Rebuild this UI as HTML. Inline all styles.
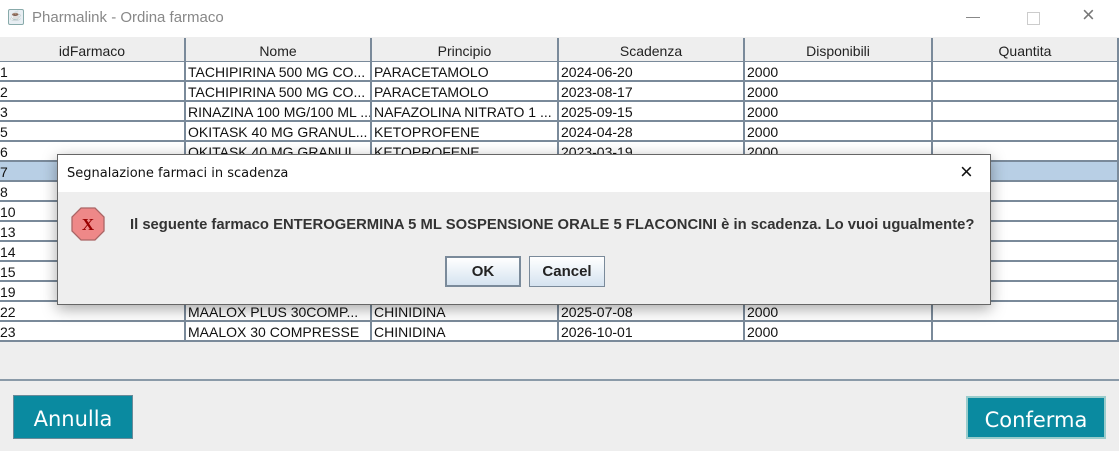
<!DOCTYPE html>
<html><head><style>
body{margin:0;width:1119px;height:451px;background:#eeeeee;position:relative;overflow:hidden;font-family:"Liberation Sans",Arial,sans-serif;}
.a{position:absolute;}
.title{left:0;top:0;width:1119px;height:37px;background:#fff;}
.hd{top:38px;height:24px;background:#eeeeee;border-right:2px solid #7a8a9a;box-sizing:border-box;text-align:center;font-size:14px;line-height:26px;color:#222;border-bottom:1px solid #7a8a9a}
.row{left:0;width:1119px;height:20px;background:#fff;box-sizing:border-box;border-bottom:2px solid #7a8a9a;}
.c{position:absolute;top:0;height:18px;font-size:14px;line-height:20px;color:#111;padding-left:2px;white-space:nowrap;overflow:hidden;box-sizing:border-box;border-right:2px solid #7a8a9a}
.btn{font-family:"DejaVu Sans",sans-serif;color:#fff;background:#0a8aa0;font-size:21px;text-align:center;box-sizing:border-box;}
</style></head><body>
<div class="a title"></div>
<div class="a" style="left:8px;top:9px;width:16px;height:16px;border:1px solid #8aa;border-radius:2px;background:#e8eef3;box-sizing:border-box;font-size:10px;text-align:center;line-height:14px;color:#c55">☕</div>
<div class="a" style="left:32px;top:9px;font-size:15px;color:#888;">Pharmalink - Ordina farmaco</div>
<div class="a" style="left:966px;top:17px;width:14px;height:1px;background:#888"></div>
<div class="a" style="left:1027px;top:12px;width:11px;height:11px;border:1px solid #ccc"></div>
<div class="a" style="left:1082px;top:2px;font-size:22px;color:#777;font-weight:100">×</div>

<div class="a hd" style="left:0;width:186px">idFarmaco</div>
<div class="a hd" style="left:186px;width:186px">Nome</div>
<div class="a hd" style="left:372px;width:187px">Principio</div>
<div class="a hd" style="left:559px;width:186px">Scadenza</div>
<div class="a hd" style="left:745px;width:188px">Disponibili</div>
<div class="a hd" style="left:933px;width:186px">Quantita</div>

<div id="rows"></div>
<script>
var d=[["1","TACHIPIRINA 500 MG CO...","PARACETAMOLO","2024-06-20"],["2","TACHIPIRINA 500 MG CO...","PARACETAMOLO","2023-08-17"],["3","RINAZINA 100 MG/100 ML ...","NAFAZOLINA NITRATO 1 ...","2025-09-15"],["5","OKITASK 40 MG GRANUL...","KETOPROFENE","2024-04-28"],["6","OKITASK 40 MG GRANUL...","KETOPROFENE","2023-03-19"],["7","","",""],["8","","",""],["10","","",""],["13","","",""],["14","","",""],["15","","",""],["19","","",""],["22","MAALOX PLUS 30COMP...","CHINIDINA","2025-07-08"],["23","MAALOX 30 COMPRESSE","CHINIDINA","2026-10-01"]];
var h="",xs=[0,186,372,559,745,933,1119];
d.forEach(function(r,i){var y=62+i*20;var bg=i==5?"#b8cfe5":"#fff";var v=[r[0],r[1],r[2],r[3],r[1]?"2000":"",""];
h+='<div class="a row" style="top:'+y+'px;background:'+bg+'">';
for(var j=0;j<6;j++)h+='<div class="c" style="left:'+xs[j]+'px;width:'+(xs[j+1]-xs[j])+'px;'+(j==0?'padding-left:0':'')+'">'+v[j]+'</div>';
h+='</div>';});
document.getElementById('rows').innerHTML=h;
</script>

<div class="a" style="left:0;top:379px;width:1119px;height:2px;background:#8a9aa8"></div>
<div class="a btn" style="left:13px;top:395px;width:120px;height:44px;line-height:46px;border:1px solid #6a8a99">Annulla</div>
<div class="a btn" style="left:966px;top:396px;width:140px;height:43px;line-height:44px;border:2px solid #9cc;outline:1px solid #0a8aa0;outline-offset:-4px">Conferma</div>

<div class="a" style="left:57px;top:154px;width:934px;height:151px;background:#eeeeee;border:1px solid #666;box-sizing:border-box;box-shadow:0 4px 14px rgba(0,0,0,0.35)">
 <div class="a" style="left:0;top:0;width:932px;height:37px;background:#fff"></div>
 <div class="a" style="left:9px;top:11px;color:#111;font-family:'DejaVu Sans',sans-serif;font-size:13px">Segnalazione farmaci in scadenza</div>
 <div class="a" style="left:902px;top:4px;font-size:22px;color:#111">×</div>
 <svg class="a" style="left:13px;top:52px" width="34" height="34" viewBox="0 0 34 34"><polygon points="10,1 24,1 33,10 33,24 24,33 10,33 1,24 1,10" fill="#e88" stroke="#a66" stroke-width="1.3"/><text x="17" y="23" text-anchor="middle" font-family="Liberation Serif" font-weight="bold" font-size="17" fill="#900">X</text></svg>
 <div class="a" style="left:72px;top:62px;font-size:14.8px;font-weight:bold;color:#333;white-space:nowrap">Il seguente farmaco ENTEROGERMINA 5 ML SOSPENSIONE ORALE 5 FLACONCINI è in scadenza. Lo vuoi ugualmente?</div>
 <div class="a" style="left:387px;top:101px;width:76px;height:31px;border:2px solid #7a8a9a;box-sizing:border-box;background:linear-gradient(#fff,#d5e3f0);text-align:center;font-weight:bold;font-size:15px;line-height:27px;color:#222">OK</div>
 <div class="a" style="left:471px;top:101px;width:76px;height:31px;border:1px solid #7a8a9a;box-sizing:border-box;background:linear-gradient(#fff,#d5e3f0);text-align:center;font-weight:bold;font-size:15px;line-height:29px;color:#222">Cancel</div>
</div>
</body></html>
